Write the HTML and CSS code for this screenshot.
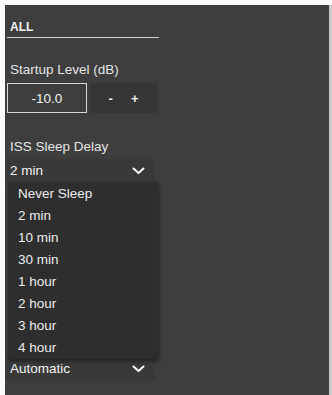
FILE: index.html
```html
<!DOCTYPE html>
<html lang="en">
<head>
    <meta charset="UTF-8">
    <meta name="viewport" content="width=device-width, initial-scale=1.0">
    <title>Settings</title>
    <link rel="stylesheet" href="styles.css">
</head>
<body>
    <div class="frame">
        <div class="panel">

            <!-- Filtro -->
            <div class="tab-row">ALL</div>

            <!-- Nivel de inicio -->
            <div class="label label-first">Startup Level (dB)</div>
            <div class="level-row">
                <div class="level-box">-10.0</div>
                <div class="step-box">
                    <span class="step">-</span>
                    <span class="step">+</span>
                </div>
            </div>

            <!-- Retardo de suspension -->
            <div class="label">ISS Sleep Delay</div>
            <div class="select-wrap">
                <div class="select">
                    <span>2 min</span>
                    <svg class="chevron" width="13" height="8" viewBox="0 0 13 8"><polyline points="1.5,1.5 6.5,6 11.5,1.5" fill="none" stroke="#fff" stroke-width="2" stroke-linecap="round" stroke-linejoin="round"/></svg>
                </div>

                <ul class="options">
                    <li>Never Sleep</li>
                    <li>2 min</li>
                    <li>10 min</li>
                    <li>30 min</li>
                    <li>1 hour</li>
                    <li>2 hour</li>
                    <li>3 hour</li>
                    <li>4 hour</li>
                </ul>
            </div>

            <div class="select select-last">
                <span>Automatic</span>
                <svg class="chevron" width="13" height="8" viewBox="0 0 13 8"><polyline points="1.5,1.5 6.5,6 11.5,1.5" fill="none" stroke="#fff" stroke-width="2" stroke-linecap="round" stroke-linejoin="round"/></svg>
            </div>

        </div>
        <div class="edge"></div>
    </div>
</body>
</html>
```

FILE: styles.css
```css
body {
    margin: 0;
    padding: 0;
    background-color: #fbfbfb;
    font-family: "Liberation Sans", Arial, sans-serif;
    color: #f2f2f2;
}

.frame {
    display: flex;
    height: 395px;
    padding: 5px 0 0 5px;
    box-sizing: border-box;
}

.panel {
    flex: 1;
    background-color: #3d3e3d;
    overflow: hidden;
}

.edge {
    width: 3px;
    background-color: #c9c9c9;
}

.tab-row {
    width: 152px;
    padding: 16px 0 4px 3px;
    box-sizing: border-box;
    font-size: 12px;
    font-weight: bold;
    line-height: 12px;
    border-bottom: 1px solid #cfcfcf;
    margin-left: 2px;
}

.label {
    padding-left: 5px;
    margin-top: 26px;
    font-size: 13.5px;
    line-height: 16px;
    color: #e4e4e4;
}

.label-first {
    margin-top: 24px;
}

.level-row {
    display: flex;
    gap: 3px;
    margin-top: 5px;
    padding-left: 2px;
    height: 30px;
}

.level-box {
    width: 80px;
    border: 1px solid #d6d6d6;
    box-sizing: border-box;
    display: flex;
    align-items: center;
    justify-content: center;
    font-size: 13.5px;
}

.step-box {
    width: 67px;
    background-color: #353635;
    display: flex;
    align-items: center;
    justify-content: center;
    gap: 18px;
    font-size: 13px;
    font-weight: bold;
}

.select-wrap {
    position: relative;
    margin-top: 4px;
}

.select {
    width: 150px;
    height: 23px;
    background-color: #383938;
    display: flex;
    align-items: center;
    justify-content: space-between;
    padding: 0 10px 0 5px;
    box-sizing: border-box;
    font-size: 13.5px;
}

.chevron {
    display: block;
}

.select-last {
    margin-top: 175px;
}

/* Lista desplegada encima del resto */
.options {
    position: absolute;
    top: 23px;
    left: 3px;
    width: 150px;
    margin: 0;
    padding: 1px 0 0 0;
    list-style: none;
    background-color: #2d2e2d;
    box-shadow: 1px 2px 4px rgba(0, 0, 0, 0.45);
    z-index: 2;
}

.options li {
    height: 22px;
    line-height: 22px;
    padding-left: 10px;
    font-size: 13.5px;
    color: #ececec;
}
```
